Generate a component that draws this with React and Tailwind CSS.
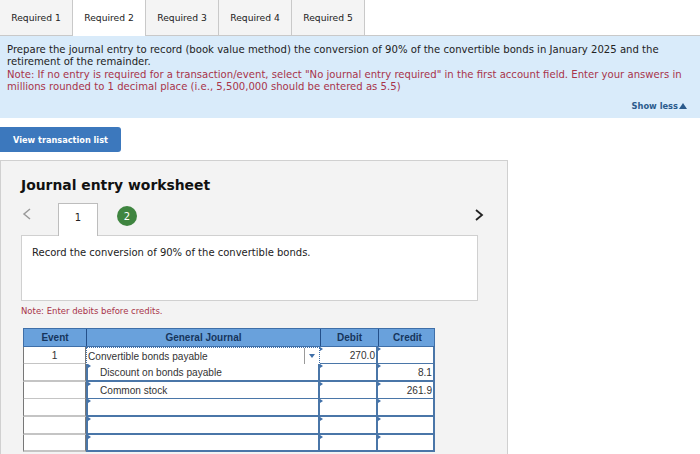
// App.jsx
const verdana = "font-['DejaVu_Sans',Verdana,sans-serif]";
const arial = "font-['Liberation_Sans',Arial,sans-serif]";

const tabs = ["Required 1", "Required 2", "Required 3", "Required 4", "Required 5"];

const rows = [
  { h: "h-[17px]", event: "1", account: "Convertible bonds payable", debit: "270.0", credit: "", active: true },
  { h: "h-[18px]", event: "", account: "Discount on bonds payable", debit: "", credit: "8.1", indent: true },
  { h: "h-[17px]", event: "", account: "Common stock", debit: "", credit: "261.9", indent: true },
  { h: "h-[18px]", event: "", account: "", debit: "", credit: "" },
  { h: "h-[18px]", event: "", account: "", debit: "", credit: "" },
  { h: "h-[17px]", event: "", account: "", debit: "", credit: "" },
];

const Tick = () => (
  <span className="absolute left-0 top-0 h-0 w-0 border-y-[2.5px] border-l-[3px] border-y-transparent border-l-[#3f6fa8]" />
);

const App = () => {
  return (
    <div className={`${verdana} h-[454px] w-[700px] overflow-hidden bg-white text-[#222]`}>
      {/* Tabs */}
      <div className="flex h-9 border-b border-[#c9c9c9]">
        {tabs.map((t, i) => (
          <div
            key={t}
            className={`flex w-[73px] items-center justify-center border-r border-[#c9c9c9] text-[9.2px] ${
              i === 1 ? "relative h-9 bg-white" : "h-[35px] bg-[#f4f4f4]"
            }`}
          >
            {t}
          </div>
        ))}
      </div>

      {/* Question */}
      <div className="h-[82px] bg-[#d9ebfa] px-[7px] pt-[8px] text-[10.1px] leading-[12.4px]">
        <p className="whitespace-nowrap">
          Prepare the journal entry to record (book value method) the conversion of 90% of the convertible bonds in January 2025 and the
          <br />
          retirement of the remainder.
        </p>
        <p className="whitespace-nowrap text-[#a8344a]">
          Note: If no entry is required for a transaction/event, select "No journal entry required" in the first account field. Enter your answers in
          <br />
          millions rounded to 1 decimal place (i.e., 5,500,000 should be entered as 5.5)
        </p>
        <div className="mt-[6px] flex items-center justify-end gap-px pr-[6px] text-[8.3px] font-bold text-[#2a5a8c]">
          Show less
          <span className="h-0 w-0 border-x-[4px] border-b-[6px] border-x-transparent border-b-[#2a5a8c]" />
        </div>
      </div>

      {/* Transaction list button */}
      <button className="mt-[9px] block h-[25px] w-[121px] rounded-r-[3px] bg-[#3c78bd] pt-px text-[8.2px] font-bold text-white">
        View transaction list
      </button>

      {/* Worksheet */}
      <div className="mt-2 h-[294px] w-[508px] border border-b-0 border-[#d0d0d0] bg-[#f3f3f3] pl-5 pt-[14px]">
        <h2 className="text-[13.9px] font-bold leading-[20px] text-[#111]">Journal entry worksheet</h2>

        <div className="relative mt-[8px] flex h-[32px] items-start">
          <svg className="mt-[5px] h-3 w-3" viewBox="0 0 12 12" fill="none" stroke="#9a9a9a" strokeWidth="1.5">
            <path d="M9 1 L3 6 L9 11" />
          </svg>
          <div className="relative z-10 ml-[25px] flex h-[33px] w-[40px] items-center justify-center border border-b-0 border-[#bdbdbd] bg-white pb-[6px] text-[10px]">
            1
          </div>
          <div className="ml-[19px] mt-[3px] flex h-5 w-5 items-center justify-center rounded-full bg-[#3f8540] text-[10px] text-white">
            2
          </div>
          <svg className="absolute left-[451px] top-[5px] h-3.5 w-3.5" viewBox="0 0 14 14" fill="none" stroke="#222" strokeWidth="1.8">
            <path d="M4 2 L10 7 L4 12" />
          </svg>
        </div>

        <div className="h-[66px] w-[457px] border border-[#d0d0d0] bg-white pl-[10px] pt-[10px] text-[10px] leading-[14px]">
          Record the conversion of 90% of the convertible bonds.
        </div>

        <p className="mt-[4px] text-[8.5px] leading-[12px] text-[#a8344a]">Note: Enter debits before credits.</p>

        {/* Journal table */}
        <div className={`${arial} ml-[2px] mt-[11px] w-[412px] text-[10.1px] text-[#333]`}>
          <div className="grid h-[19px] grid-cols-[63px_234px_58px_57px] border border-[#3f6fa8] bg-[#69a1dc] text-[10px] font-bold text-[#16355c]">
            <div className="flex items-center justify-center border-r border-[#24508a]">Event</div>
            <div className="flex items-center justify-center border-r border-[#24508a]">General Journal</div>
            <div className="flex items-center justify-center border-r border-[#24508a]">Debit</div>
            <div className="flex items-center justify-center">Credit</div>
          </div>
          {rows.map((r, i) => (
            <div key={i} className={`grid ${r.h} grid-cols-[63px_234px_58px_57px]`}>
              <div className="flex items-center justify-center border-x border-b-2 border-x-[#777] border-b-[#c4c4c4] bg-white pt-px">
                {r.event}
              </div>
              {r.active ? (
                <div className="relative flex items-center border border-dotted border-[#3f6fa8] bg-white pl-[1px] pt-px">
                  {r.account}
                  <span className="absolute right-0 top-0 flex h-full w-[15px] items-center justify-center border-l border-[#9a9a9a]">
                    <span className="h-0 w-0 border-x-[3.5px] border-t-[4px] border-x-transparent border-t-[#3f6fa8]" />
                  </span>
                </div>
              ) : (
                <div
                  className={`relative flex items-center border-x-2 border-b-2 border-[#4a76a8] bg-white pt-px ${
                    r.indent ? "pl-[12px]" : ""
                  }`}
                >
                  <Tick />
                  {r.account}
                </div>
              )}
              <div className="relative flex items-center justify-end border-b-2 border-r-2 border-[#4a76a8] bg-white pr-[1px] pt-px">
                <Tick />
                {r.debit}
              </div>
              <div className="relative flex items-center justify-end border-b-2 border-r-2 border-[#4a76a8] bg-white pr-[1px] pt-px">
                <Tick />
                {r.credit}
              </div>
            </div>
          ))}
        </div>
      </div>
    </div>
  );
};

export default App;
